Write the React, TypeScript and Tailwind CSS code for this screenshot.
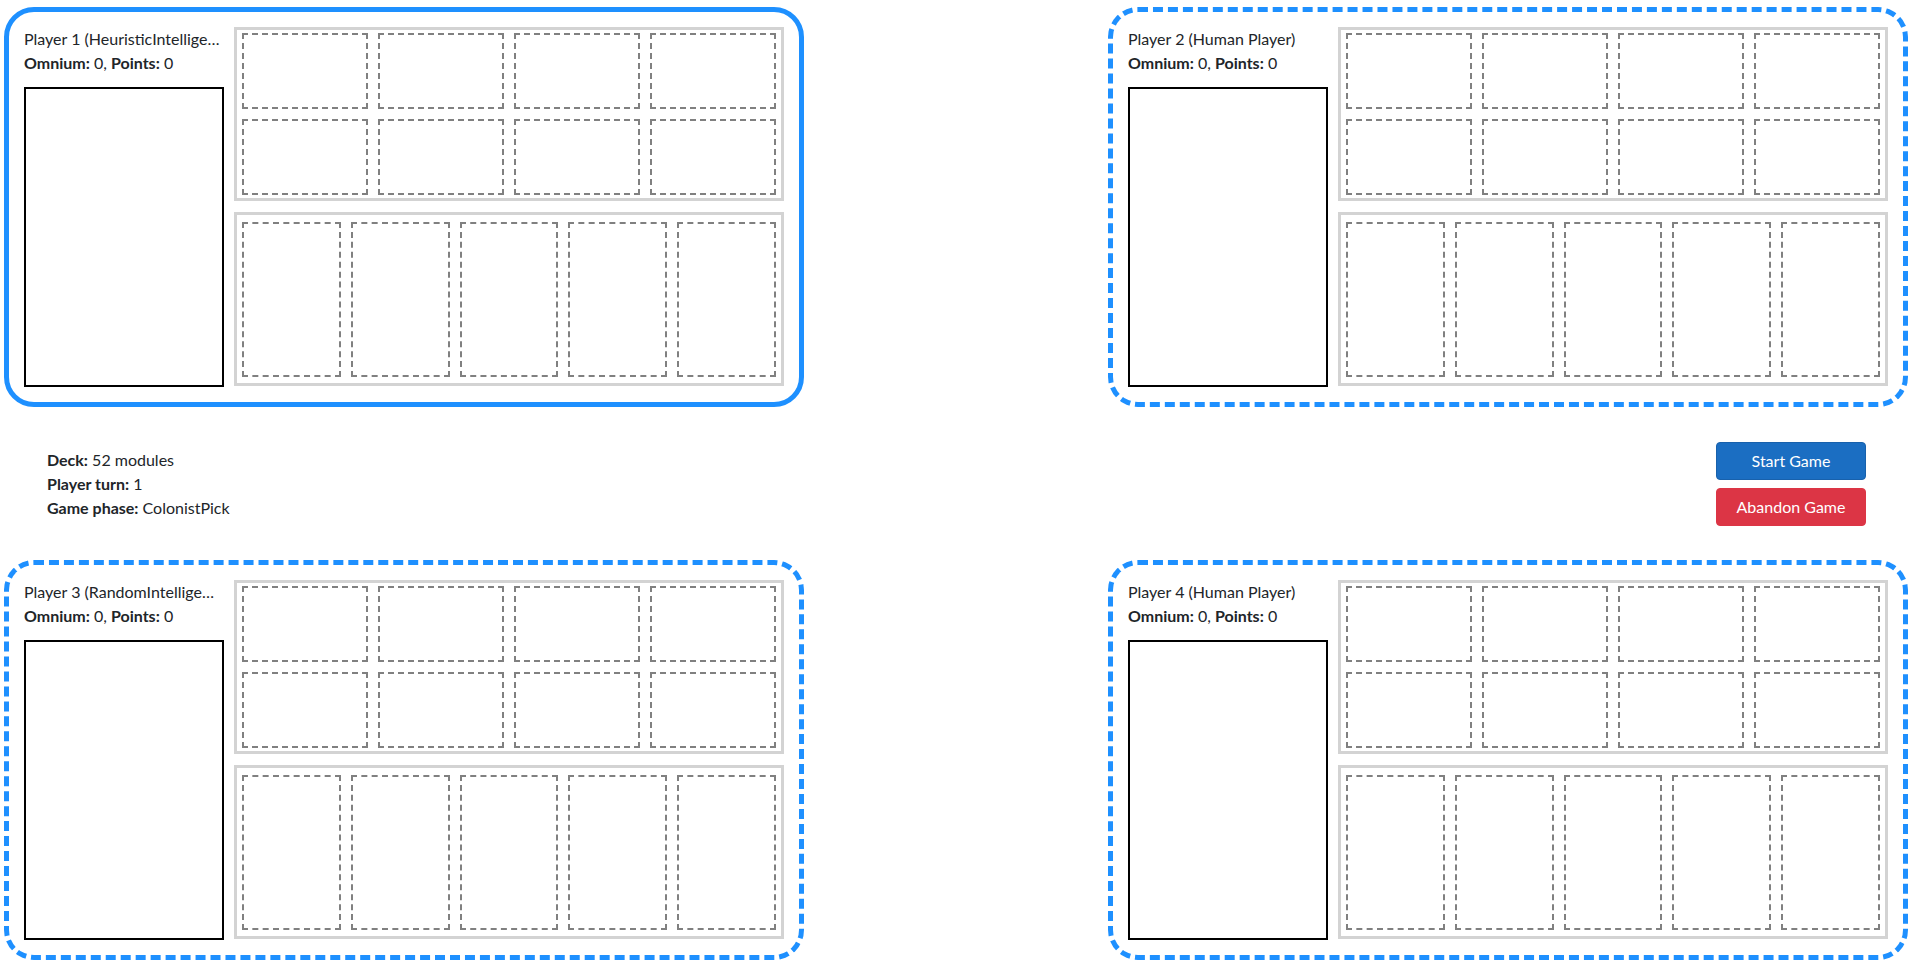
import React from 'react';

interface PlayerBoardProps {
    title: string;
    omnium: number;
    points: number;
    active?: boolean;
}

const font = { fontFamily: 'Lato, "Open Sans", "Liberation Sans", sans-serif' };

function Slot() {
    return <div className="border-2 border-dashed border-[#808080]" />;
}

function PlayerBoard({ title, omnium, points, active }: PlayerBoardProps) {
    return (
        <div
            className={
                active
                    ? 'flex h-[400px] w-[800px] gap-[10px] rounded-[30px] border-[5px] border-solid border-[#1e90ff] p-[15px]'
                    : 'flex h-[400px] w-[800px] gap-[10px] rounded-[30px] border-[5px] border-dashed border-[#1e90ff] p-[15px]'
            }
        >
            <div className="flex w-[200px] shrink-0 flex-col">
                <div className="truncate text-[16px] leading-[24px] text-[#212529]">{title}</div>
                <div className="text-[16px] leading-[24px] text-[#212529]">
                    <b>Omnium:</b> {omnium}, <b>Points:</b> {points}
                </div>
                <div className="mt-[12px] h-[300px] border-2 border-black" />
            </div>
            <div className="flex flex-1 flex-col gap-[11px]">
                <div className="grid h-[174px] grid-cols-4 grid-rows-2 gap-x-[10px] gap-y-[10px] border-[3px] border-[#d3d3d3] px-[5px] py-[3px]">
                    {[0, 1, 2, 3, 4, 5, 6, 7].map((i) => (
                        <Slot key={i} />
                    ))}
                </div>
                <div className="grid h-[174px] grid-cols-5 gap-x-[10px] border-[3px] border-[#d3d3d3] px-[5px] pt-[7px] pb-[6px]">
                    {[0, 1, 2, 3, 4].map((i) => (
                        <Slot key={i} />
                    ))}
                </div>
            </div>
        </div>
    );
}

export default function App() {
    return (
        <div className="min-h-screen bg-white pt-[7px] text-[#212529]" style={font}>
            <div className="flex justify-between pr-[5px] pl-[4px]">
                <PlayerBoard title="Player 1 (HeuristicIntellige…" omnium={0} points={0} active />
                <PlayerBoard title="Player 2 (Human Player)" omnium={0} points={0} />
            </div>

            <div className="flex h-[153px] items-center justify-between px-[47px]">
                <div className="text-[16px] leading-[24px]">
                    <div>
                        <b>Deck:</b> 52 modules
                    </div>
                    <div>
                        <b>Player turn:</b> 1
                    </div>
                    <div>
                        <b>Game phase:</b> ColonistPick
                    </div>
                </div>
                <div className="flex flex-col gap-[8px]">
                    <button className="h-[38px] w-[150px] rounded-[4px] border border-[#1861ac] bg-[#1b6ec2] text-[16px] text-white">
                        Start Game
                    </button>
                    <button className="h-[38px] w-[150px] rounded-[4px] border border-[#dc3545] bg-[#dc3545] text-[16px] text-white">
                        Abandon Game
                    </button>
                </div>
            </div>

            <div className="flex justify-between pr-[5px] pl-[4px]">
                <PlayerBoard title="Player 3 (RandomIntellige…" omnium={0} points={0} />
                <PlayerBoard title="Player 4 (Human Player)" omnium={0} points={0} />
            </div>
        </div>
    );
}
